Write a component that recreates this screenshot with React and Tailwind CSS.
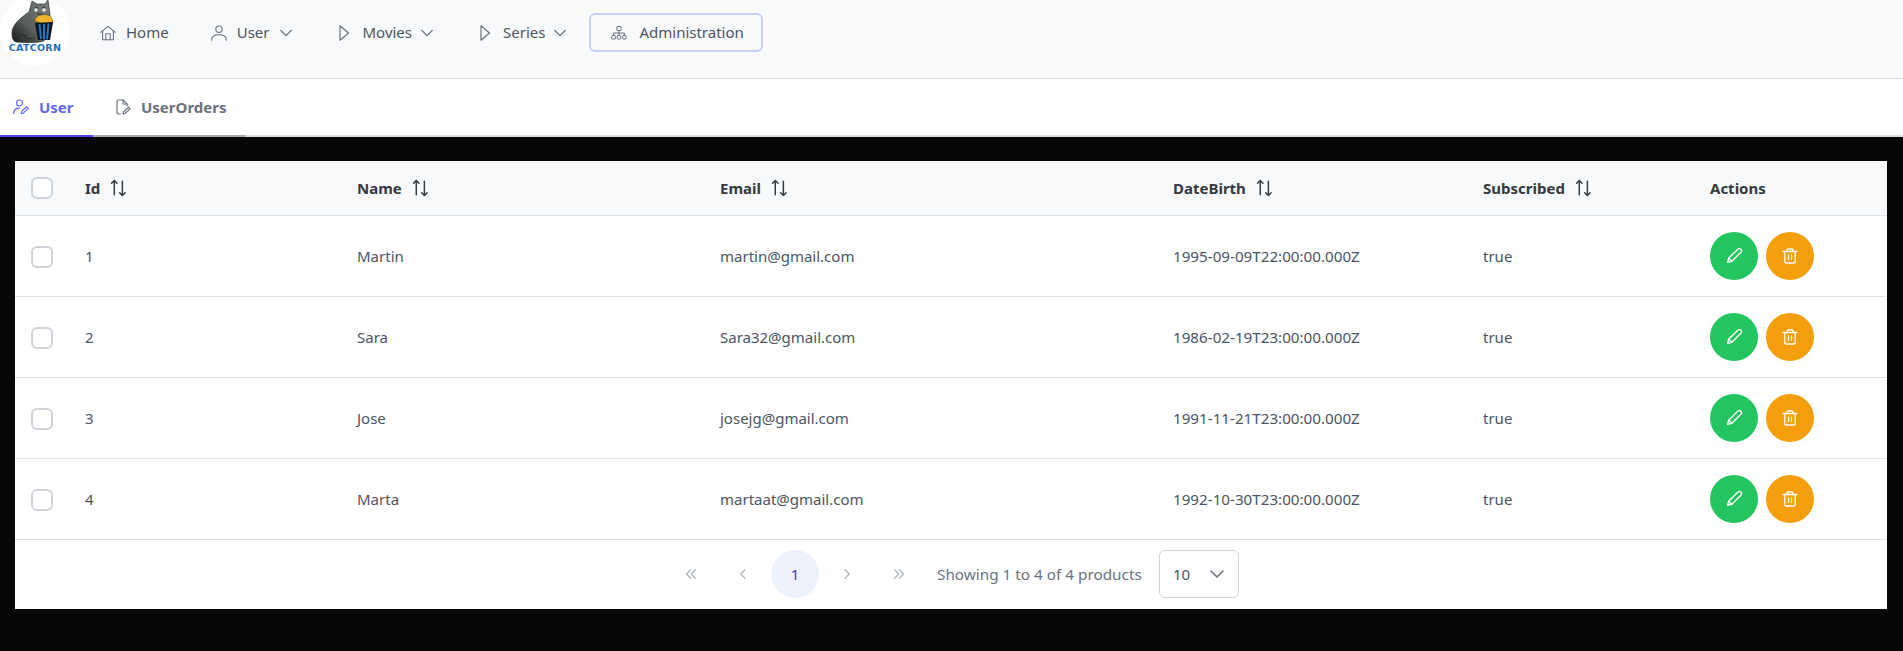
const font = "font-['Noto_Sans','Open_Sans',sans-serif]";

const Icon = ({ size = 16, className = "", sw = 1.3, children }) => (
	<svg
		width={size}
		height={size}
		viewBox="0 0 16 16"
		fill="none"
		stroke="currentColor"
		strokeWidth={sw}
		strokeLinecap="round"
		strokeLinejoin="round"
		className={`shrink-0 ${className}`}
	>
		{children}
	</svg>
);

const HomeIcon = () => (
	<Icon sw={1.1}>
		<path d="M.8 7.300 8 1.300l7.200 6" />
		<path d="M2.600 5.900v8.800h10.800V5.900" />
		<path d="M5.800 14.700V8.800h4.400v5.900" />
	</Icon>
);
const UserIcon = () => (
	<Icon sw={1.1}>
		<circle cx="8" cy="4.200" r="3.200" />
		<path d="M0.600 15.200c0-3.800 2.800-5.400 7.400-5.400s7.400 1.600 7.400 5.400" />
	</Icon>
);
const PlayIcon = () => (
	<Icon sw={1.2}>
		<path d="M5 .8v14.400L13.500 8z" />
	</Icon>
);
const ChevronDown = ({ size = 16 }) => (
	<Icon size={size} sw={1.6}>
		<path d="M2 5 8 11l6-6" />
	</Icon>
);
const SitemapIcon = () => (
	<Icon sw={1}>
		<rect x="5.800" y="1.500" width="4.400" height="4" rx="0.600" />
		<path d="M8 5.500V8M2.600 10.500V8h10.800v2.500M8 8v2.500" />
		<rect x="0.800" y="10.500" width="3.600" height="3.600" rx="1" />
		<rect x="6.200" y="10.500" width="3.600" height="3.600" rx="1" />
		<rect x="11.600" y="10.500" width="3.600" height="3.600" rx="1" />
	</Icon>
);
const UserEditIcon = () => (
	<Icon sw={1.2}>
		<circle cx="6.500" cy="4" r="3" />
		<path d="M.8 14.500c-.4-3.600 2-5.300 5.700-5.300" />
		<path d="M8.200 14.600l.5-2.200 5-4.600 1.600 1.600-5 4.700z" />
	</Icon>
);
const FileEditIcon = () => (
	<Icon sw={1.2}>
		<path d="M5.500 15H3.200A1.200 1.200 0 0 1 2 13.800V2.200A1.200 1.200 0 0 1 3.200 1H8l4 4v2" />
		<path d="M8 1v4h4" />
		<path d="M8 15l.5-2.300 5-4.500 1.600 1.700-5 4.600z" />
	</Icon>
);
const SortIcon = () => (
	<Icon size={18} sw={1.3}>
		<path d="M3.800 14V1.300M1.400 3.800l2.400-2.500 2.400 2.500" />
		<path d="M11 2v12.700M8.600 12.200l2.400 2.500 2.400-2.500" />
	</Icon>
);
const PencilIcon = () => (
	<Icon size={17} sw={1.3}>
		<path d="M1.500 14.500l1-4L11.300 1.800a1.600 1.600 0 0 1 2.300 0l.6.6a1.600 1.600 0 0 1 0 2.300L5.500 13.500z" />
		<path d="M2.500 10.500l3 3" />
	</Icon>
);
const TrashIcon = () => (
	<Icon sw={1.3}>
		<path d="M1 3.500h14" />
		<path d="M5 3.500V2.200A1.200 1.200 0 0 1 6.200 1h3.600A1.200 1.200 0 0 1 11 2.200v1.300" />
		<path d="M2.800 3.500v10.300A1.200 1.200 0 0 0 4 15h8a1.200 1.200 0 0 0 1.200-1.200V3.500" />
		<path d="M6.500 7v4.500M9.500 7v4.500" />
	</Icon>
);

function Logo() {
	return (
		<div className="relative w-[70px] h-[70px] -mt-[4px] rounded-full bg-white shrink-0 overflow-hidden">
			<svg width="70" height="70" viewBox="0 -4 70 70" className="absolute left-0 top-0">
				<defs>
					<linearGradient id="catBody" x1="0.900" y1="0.100" x2="0.100" y2="0.950">
						<stop offset="0" stopColor="#767c7a" />
						<stop offset="0.600" stopColor="#585e5c" />
						<stop offset="1" stopColor="#232625" />
					</linearGradient>
				</defs>
				<path d="M12 33c0-8 8-15 17-21l3-11 5 3h8l3-4 2 14c0 3 0 5-2 7l-4 20c-6 2-20 2-28 1-3-1-4-4-4-9z" fill="url(#catBody)" stroke="#1d2120" strokeWidth="0.600" />
				<path d="M20 36c2-2 4-2 5 0 1 3 5 3 9 2" stroke="#1d2120" strokeWidth="0.800" fill="none" />
				<circle cx="36" cy="10" r="1.800" fill="#e8e8e0" />
				<circle cx="44" cy="10" r="1.800" fill="#e8e8e0" />
				<path d="M35 7l3 1M45 7l-3 1M37 14h6" stroke="#1d2120" strokeWidth="0.800" />
				<path d="M35 21c0-3 3-6 7-6 4-1 9 0 10 4l1 3-9 2z" fill="#f1b62e" stroke="#6b4d0c" strokeWidth="0.500" />
				<path d="M35 23l18-1-3 18H38z" fill="#101418" />
				<path d="M39.500 24l1.500 15M44 24v15.500M48.500 23.500l-1.500 16" stroke="#1f78c8" strokeWidth="2" />
			</svg>
			<span className="absolute left-0 right-0 top-[47px] text-center text-[9.500px] leading-[10px] font-bold tracking-[0.3px] text-[#1b6fc0] font-['DejaVu_Sans',sans-serif]">
				CATCORN
			</span>
		</div>
	);
}

function NavItem({ icon, label, chevron, active, gapClass = "ml-[10px]", chevronClass = "ml-[9px]" }) {
	return (
		<div
			className={`flex items-center h-[39px] rounded-md text-[15px] text-[#4b5563] ${
				active ? "border-2 border-[#c7d2fe] pl-[20px] pr-[17px]" : "px-[20px]"
			}`}
		>
			<span className="text-[#6b7280]">{icon}</span>
			<span className={gapClass}>{label}</span>
			{chevron && (
				<span className={`${chevronClass} text-[#6b7280]`}>
					<ChevronDown size={14} />
				</span>
			)}
		</div>
	);
}

function Tab({ icon, label, active }) {
	return (
		<div
			className={`flex items-center gap-[10px] h-[58px] border-b-2 text-[15px] font-bold -mb-[2px] ${
				active ? "border-[#4f46e5] text-[#6366f1] pl-[13px] w-[93px]" : "border-[#a8abb0] text-[#6b7280] pl-[22px] w-[153px]"
			}`}
		>
			{icon}
			<span>{label}</span>
		</div>
	);
}

const users = [
	{ id: 1, name: "Martin", email: "martin@gmail.com", birth: "1995-09-09T22:00:00.000Z" },
	{ id: 2, name: "Sara", email: "Sara32@gmail.com", birth: "1986-02-19T23:00:00.000Z" },
	{ id: 3, name: "Jose", email: "josejg@gmail.com", birth: "1991-11-21T23:00:00.000Z" },
	{ id: 4, name: "Marta", email: "martaat@gmail.com", birth: "1992-10-30T23:00:00.000Z" },
];

const Checkbox = () => (
	<div className="w-[22px] h-[22px] rounded-md border-2 border-[#ced4da] bg-white" />
);

function Th({ label, sort = true }) {
	return (
		<th className="px-[16px] text-left font-bold text-[15px] text-[#343a40]">
			<div className="flex items-center gap-[10px]">
				<span>{label}</span>
				{sort && <SortIcon />}
			</div>
		</th>
	);
}

function PageBtn({ d }) {
	return (
		<div className="w-[48px] h-[48px] mx-[2px] flex items-center justify-center text-[#a9b0b9]">
			<Icon size={14} sw={1.4}>
				<path d={d} />
			</Icon>
		</div>
	);
}

export default function App() {
	return (
		<div className={`min-h-[651px] bg-[#070707] ${font}`}>
			<header className="flex items-start h-[79px] bg-[#f8f9fa] border-b border-[#dee2e6]">
				<Logo />
				<nav className="flex items-center ml-[10px] mt-[13px] gap-[2px]">
					<NavItem icon={<HomeIcon />} label="Home" />
					<NavItem icon={<UserIcon />} label="User" chevron />
					<NavItem icon={<PlayIcon />} label="Movies" chevron gapClass="ml-[12px]" chevronClass="ml-[8px]" />
					<NavItem icon={<PlayIcon />} label="Series" chevron gapClass="ml-[11px]" chevronClass="ml-[8px]" />
					<NavItem icon={<SitemapIcon />} label="Administration" active gapClass="ml-[12px]" />
				</nav>
			</header>

			<div className="flex h-[58px] bg-white border-b-2 border-[#dee2e6]">
				<Tab icon={<UserEditIcon />} label="User" active />
				<Tab icon={<FileEditIcon />} label="UserOrders" />
			</div>

			<main className="pl-[15px] pt-[24px] pr-[16px]">
				<div className="bg-white">
					<table className="w-full table-fixed border-collapse text-[15px] text-[#4b5563]">
						<colgroup>
							<col className="w-[54px]" />
							<col className="w-[272px]" />
							<col className="w-[363px]" />
							<col className="w-[453px]" />
							<col className="w-[310px]" />
							<col className="w-[227px]" />
							<col />
						</colgroup>
						<thead>
							<tr className="h-[54px] bg-[#f8f9fa] border-b border-[#dee2e6]">
								<th className="pl-[16px]">
									<Checkbox />
								</th>
								<Th label="Id" />
								<Th label="Name" />
								<Th label="Email" />
								<Th label="DateBirth" />
								<Th label="Subscribed" />
								<Th label="Actions" sort={false} />
							</tr>
						</thead>
						<tbody>
							{users.map((u) => (
								<tr key={u.id} className="h-[81px] border-b border-[#dee2e6]">
									<td className="pl-[16px] pt-[2px]">
										<Checkbox />
									</td>
									<td className="px-[16px] pt-[2px]">{u.id}</td>
									<td className="px-[16px] pt-[2px]">{u.name}</td>
									<td className="px-[16px] pt-[2px]">{u.email}</td>
									<td className="px-[16px] pt-[2px] text-[15.200px]">{u.birth}</td>
									<td className="px-[16px] pt-[2px]">true</td>
									<td className="px-[16px]">
										<div className="flex gap-[8px]">
											<button className="w-[48px] h-[48px] rounded-full bg-[#22c55e] text-white flex items-center justify-center">
												<PencilIcon />
											</button>
											<button className="w-[48px] h-[48px] rounded-full bg-[#f59e0b] text-white flex items-center justify-center">
												<TrashIcon />
											</button>
										</div>
									</td>
								</tr>
							))}
						</tbody>
					</table>

					<div className="flex items-center h-[69px] text-[15px] pl-[650px]">
						<PageBtn d="M7.500 3 3 8l4.500 5M13 3 8.500 8l4.500 5" />
						<PageBtn d="M10.500 3 5.500 8l5 5" />
						<div className="w-[48px] h-[48px] mx-[2px] rounded-full bg-[#eef2ff] text-[#4338ca] flex items-center justify-center">
							1
						</div>
						<PageBtn d="M5.500 3l5 5-5 5" />
						<PageBtn d="M3 3l4.500 5L3 13M8.500 3 13 8l-4.500 5" />
						<span className="ml-[12px] w-[204px] whitespace-nowrap text-[15.300px] text-[#6b7280]">Showing 1 to 4 of 4 products</span>
						<div className="flex items-center justify-between w-[80px] h-[48px] ml-[18px] pl-[13px] pr-[13px] rounded-md border border-[#ced4da] text-[#4b5563]">
							<span>10</span>
							<span className="text-[#6b7280]">
								<ChevronDown />
							</span>
						</div>
					</div>
				</div>
			</main>
		</div>
	);
}
